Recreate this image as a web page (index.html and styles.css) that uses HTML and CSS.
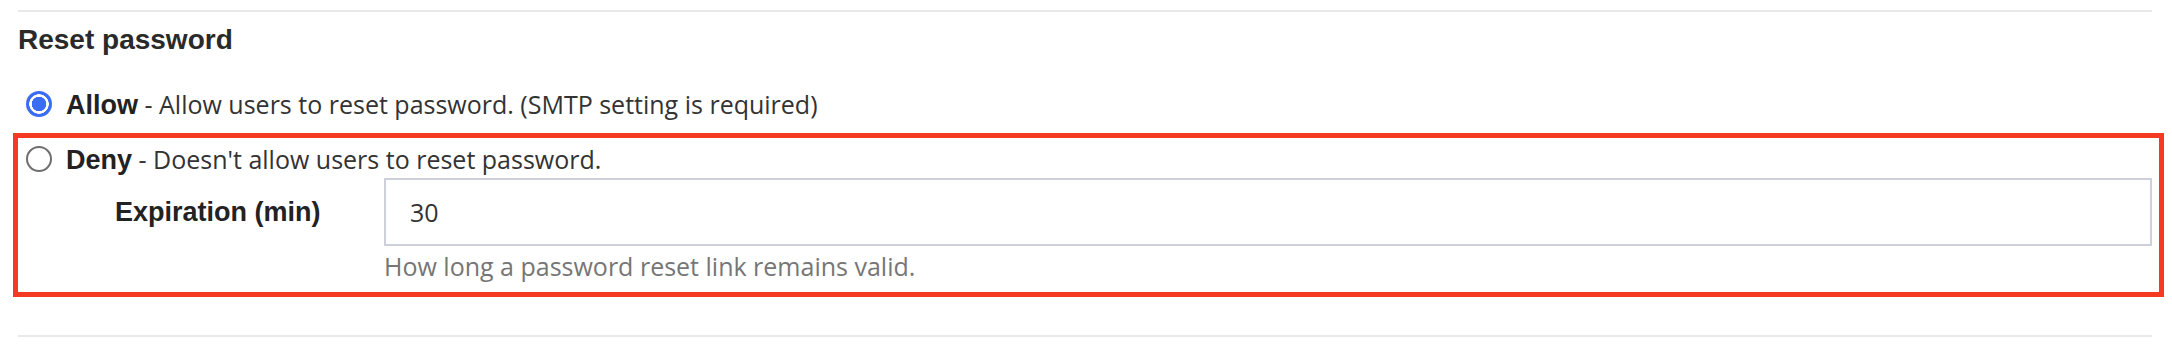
FILE: index.html
```html
<!DOCTYPE html>
<html>
    <head>
        <meta charset="utf-8">
        <title>Reset password</title>
        <link rel="stylesheet" href="styles.css">
    </head>
    <body>
        <div class="panel">
            <hr class="divider">
            <h3 class="title">Reset password</h3>
            <div class="options">
                <label class="option">
                    <span class="radio checked"></span>
                    <span class="option-text"><b>Allow</b> - Allow users to reset password. (SMTP setting is required)</span>
                </label>
                <div class="highlight">
                    <label class="option">
                        <span class="radio"></span>
                        <span class="option-text"><b>Deny</b> - Doesn't allow users to reset password.</span>
                    </label>
                    <div class="field">
                        <div class="field-label">Expiration (min)</div>
                        <div class="field-body">
                            <input type="text" class="input" value="30">
                            <div class="help">How long a password reset link remains valid.</div>
                        </div>
                    </div>
                </div>
            </div>
            <hr class="divider bottom">
        </div>
    </body>
</html>
```

FILE: styles.css
```css
body {
    margin: 0;
    background: #fff;
    font-family: "Open Sans", "Noto Sans", sans-serif;
    color: #333;
}
.panel {
    margin: 10px 20px 0 18px;
}
.divider {
    border: 0;
    border-top: 2px solid #e9e9e9;
    margin: 0;
}
.divider.bottom {
    margin-top: 38px;
}
.title {
    margin: 14px 0 0;
    font: bold 28px/28px "Liberation Sans", Arial, sans-serif;
    color: #2a2a2a;
}
.options {
    margin-top: 33px;
}
.option {
    display: flex;
    align-items: center;
    height: 34px;
    padding-left: 8px;
}
.option-text {
    margin-left: 14px;
    font-size: 25px;
    line-height: 34px;
    white-space: nowrap;
}
.option-text b {
    font: bold 27px "Liberation Sans", Arial, sans-serif;
    color: #222;
}
.radio {
    flex: none;
    width: 26px;
    height: 26px;
    box-sizing: border-box;
    border-radius: 50%;
    border: 2px solid #6e6e6e;
    background: #fff;
}
.radio.checked {
    border: 0;
    background: radial-gradient(circle, #3a6cf4 0 7px, #fff 7.5px 9.5px, #3a6cf4 10px);
}
/* 빨간 테두리 강조 영역 */
.highlight {
    margin: 12px -12px 0 -5px;
    padding: 4px 7px 9px 0;
    border: 5px solid #f43b22;
}
.field {
    display: flex;
    margin-top: 2px;
    padding-left: 97px;
}
.field-label {
    width: 269px;
    flex: none;
    font: bold 27px/68px "Liberation Sans", Arial, sans-serif;
    color: #222;
}
.field-body {
    flex: 1;
}
.input {
    display: block;
    width: 100%;
    height: 68px;
    box-sizing: border-box;
    margin: 0;
    padding: 0 24px;
    border: 2px solid #cdd0d9;
    border-radius: 0;
    font-family: "Open Sans", "Noto Sans", sans-serif;
    font-size: 25px;
    color: #333;
    outline: none;
}
.help {
    margin-top: 3px;
    font-size: 25px;
    line-height: 34px;
    color: #767676;
}
```
